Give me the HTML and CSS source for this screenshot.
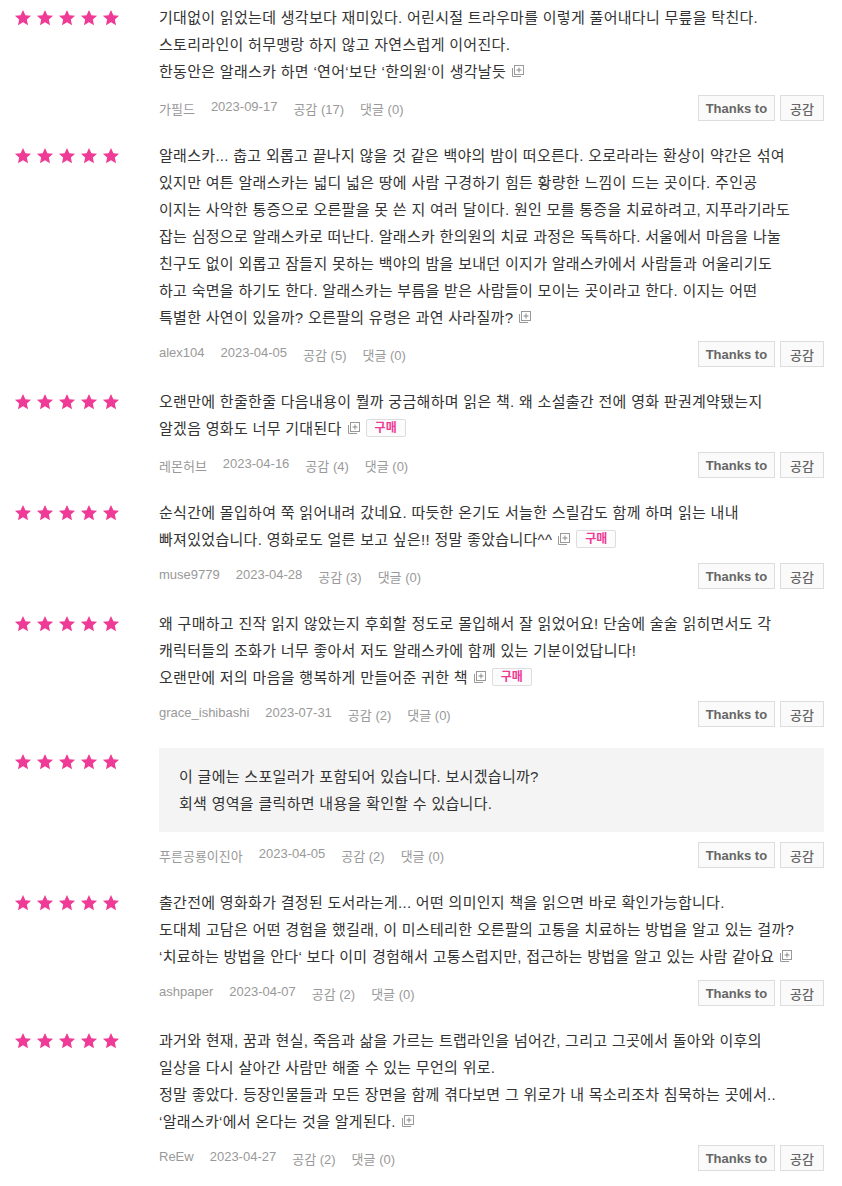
FILE: index.html
```html
<!DOCTYPE html>
<html lang="ko">
<head>
<meta charset="utf-8">
<title>리뷰</title>
<link rel="stylesheet" href="styles.css">
</head>
<body>
<svg width="0" height="0" class="defs">
  <defs>
    <symbol id="star" viewBox="0 0 24 24"><path d="M12 1.2l3.2 7 7.6.8-5.7 5.1 1.6 7.5L12 17.7l-6.7 3.9 1.6-7.5L1.2 9l7.6-.8z"/></symbol>
    <symbol id="more" viewBox="0 0 13 13"><rect x="3.5" y="0.5" width="9" height="9" fill="#fff" stroke="#999"/><path d="M8 2.5v5M5.5 5h5" stroke="#888"/><path d="M1.5 3v8.5H10" fill="none" stroke="#999"/></symbol>
  </defs>
</svg>
<div class="list">

  <div class="review">
    <div class="stars"><svg><use href="#star"/></svg><svg><use href="#star"/></svg><svg><use href="#star"/></svg><svg><use href="#star"/></svg><svg><use href="#star"/></svg></div>
    <div class="body">
      <p class="text">기대없이 읽었는데 생각보다 재미있다. 어린시절 트라우마를 이렇게 풀어내다니 무릎을 탁친다.<br>스토리라인이 허무맹랑 하지 않고 자연스럽게 이어진다.<br>한동안은 알래스카 하면 ‘연어‘보단 ‘한의원‘이 생각날듯<svg class="more"><use href="#more"/></svg></p>
      <div class="meta"><div class="info"><span>가필드</span><span>2023-09-17</span><span>공감 (17)</span><span>댓글 (0)</span></div><div class="btns"><button class="btn">Thanks to</button><button class="btn btn-ko">공감</button></div></div>
    </div>
  </div>

  <div class="review">
    <div class="stars"><svg><use href="#star"/></svg><svg><use href="#star"/></svg><svg><use href="#star"/></svg><svg><use href="#star"/></svg><svg><use href="#star"/></svg></div>
    <div class="body">
      <p class="text">알래스카... 춥고 외롭고 끝나지 않을 것 같은 백야의 밤이 떠오른다. 오로라라는 환상이 약간은 섞여<br>있지만 여튼 알래스카는 넓디 넓은 땅에 사람 구경하기 힘든 황량한 느낌이 드는 곳이다. 주인공<br>이지는 사악한 통증으로 오른팔을 못 쓴 지 여러 달이다. 원인 모를 통증을 치료하려고, 지푸라기라도<br>잡는 심정으로 알래스카로 떠난다. 알래스카 한의원의 치료 과정은 독특하다. 서울에서 마음을 나눌<br>친구도 없이 외롭고 잠들지 못하는 백야의 밤을 보내던 이지가 알래스카에서 사람들과 어울리기도<br>하고 숙면을 하기도 한다. 알래스카는 부름을 받은 사람들이 모이는 곳이라고 한다. 이지는 어떤<br>특별한 사연이 있을까? 오른팔의 유령은 과연 사라질까?<svg class="more"><use href="#more"/></svg></p>
      <div class="meta"><div class="info"><span>alex104</span><span>2023-04-05</span><span>공감 (5)</span><span>댓글 (0)</span></div><div class="btns"><button class="btn">Thanks to</button><button class="btn btn-ko">공감</button></div></div>
    </div>
  </div>

  <div class="review">
    <div class="stars"><svg><use href="#star"/></svg><svg><use href="#star"/></svg><svg><use href="#star"/></svg><svg><use href="#star"/></svg><svg><use href="#star"/></svg></div>
    <div class="body">
      <p class="text">오랜만에 한줄한줄 다음내용이 뭘까 궁금해하며 읽은 책. 왜 소설출간 전에 영화 판권계약됐는지<br>알겠음 영화도 너무 기대된다<svg class="more"><use href="#more"/></svg><span class="badge">구매</span></p>
      <div class="meta"><div class="info"><span>레몬허브</span><span>2023-04-16</span><span>공감 (4)</span><span>댓글 (0)</span></div><div class="btns"><button class="btn">Thanks to</button><button class="btn btn-ko">공감</button></div></div>
    </div>
  </div>

  <div class="review">
    <div class="stars"><svg><use href="#star"/></svg><svg><use href="#star"/></svg><svg><use href="#star"/></svg><svg><use href="#star"/></svg><svg><use href="#star"/></svg></div>
    <div class="body">
      <p class="text">순식간에 몰입하여 쭉 읽어내려 갔네요. 따듯한 온기도 서늘한 스릴감도 함께 하며 읽는 내내<br>빠져있었습니다. 영화로도 얼른 보고 싶은!! 정말 좋았습니다^^<svg class="more"><use href="#more"/></svg><span class="badge">구매</span></p>
      <div class="meta"><div class="info"><span>muse9779</span><span>2023-04-28</span><span>공감 (3)</span><span>댓글 (0)</span></div><div class="btns"><button class="btn">Thanks to</button><button class="btn btn-ko">공감</button></div></div>
    </div>
  </div>

  <div class="review">
    <div class="stars"><svg><use href="#star"/></svg><svg><use href="#star"/></svg><svg><use href="#star"/></svg><svg><use href="#star"/></svg><svg><use href="#star"/></svg></div>
    <div class="body">
      <p class="text">왜 구매하고 진작 읽지 않았는지 후회할 정도로 몰입해서 잘 읽었어요! 단숨에 술술 읽히면서도 각<br>캐릭터들의 조화가 너무 좋아서 저도 알래스카에 함께 있는 기분이었답니다!<br>오랜만에 저의 마음을 행복하게 만들어준 귀한 책<svg class="more"><use href="#more"/></svg><span class="badge">구매</span></p>
      <div class="meta"><div class="info"><span>grace_ishibashi</span><span>2023-07-31</span><span>공감 (2)</span><span>댓글 (0)</span></div><div class="btns"><button class="btn">Thanks to</button><button class="btn btn-ko">공감</button></div></div>
    </div>
  </div>

  <div class="review">
    <div class="stars"><svg><use href="#star"/></svg><svg><use href="#star"/></svg><svg><use href="#star"/></svg><svg><use href="#star"/></svg><svg><use href="#star"/></svg></div>
    <div class="body">
      <div class="spoiler">이 글에는 스포일러가 포함되어 있습니다. 보시겠습니까?<br>회색 영역을 클릭하면 내용을 확인할 수 있습니다.</div>
      <div class="meta"><div class="info"><span>푸른공룡이진아</span><span>2023-04-05</span><span>공감 (2)</span><span>댓글 (0)</span></div><div class="btns"><button class="btn">Thanks to</button><button class="btn btn-ko">공감</button></div></div>
    </div>
  </div>

  <div class="review">
    <div class="stars"><svg><use href="#star"/></svg><svg><use href="#star"/></svg><svg><use href="#star"/></svg><svg><use href="#star"/></svg><svg><use href="#star"/></svg></div>
    <div class="body">
      <p class="text">출간전에 영화화가 결정된 도서라는게... 어떤 의미인지 책을 읽으면 바로 확인가능합니다.<br>도대체 고담은 어떤 경험을 했길래, 이 미스테리한 오른팔의 고통을 치료하는 방법을 알고 있는 걸까?<br>‘치료하는 방법을 안다‘ 보다 이미 경험해서 고통스럽지만, 접근하는 방법을 알고 있는 사람 같아요<svg class="more"><use href="#more"/></svg></p>
      <div class="meta"><div class="info"><span>ashpaper</span><span>2023-04-07</span><span>공감 (2)</span><span>댓글 (0)</span></div><div class="btns"><button class="btn">Thanks to</button><button class="btn btn-ko">공감</button></div></div>
    </div>
  </div>

  <div class="review">
    <div class="stars"><svg><use href="#star"/></svg><svg><use href="#star"/></svg><svg><use href="#star"/></svg><svg><use href="#star"/></svg><svg><use href="#star"/></svg></div>
    <div class="body">
      <p class="text">과거와 현재, 꿈과 현실, 죽음과 삶을 가르는 트랩라인을 넘어간, 그리고 그곳에서 돌아와 이후의<br>일상을 다시 살아간 사람만 해줄 수 있는 무언의 위로.<br>정말 좋았다. 등장인물들과 모든 장면을 함께 겪다보면 그 위로가 내 목소리조차 침묵하는 곳에서..<br>‘알래스카‘에서 온다는 것을 알게된다.<svg class="more"><use href="#more"/></svg></p>
      <div class="meta"><div class="info"><span>ReEw</span><span>2023-04-27</span><span>공감 (2)</span><span>댓글 (0)</span></div><div class="btns"><button class="btn">Thanks to</button><button class="btn btn-ko">공감</button></div></div>
    </div>
  </div>

</div>
</body>
</html>
```

FILE: styles.css
```css
html, body {
  margin: 0;
  padding: 0;
  background: #fff;
}
body {
  font-family: "Liberation Sans", "Noto Sans CJK KR", sans-serif;
  color: #333;
}
.defs {
  position: absolute;
  width: 0;
  height: 0;
}
.list {
  width: 810px;
  padding-left: 14px;
}
.review {
  display: flex;
  padding: 4px 0 17px;
}
.stars {
  width: 145px;
  flex: none;
  display: flex;
  gap: 4px;
  padding-top: 5px;
  height: 18px;
}
.stars svg {
  width: 18px;
  height: 18px;
  fill: #ef3b96;
}
.body {
  flex: 1;
  min-width: 0;
}
.text {
  margin: 0;
  font-size: 15px;
  line-height: 27px;
  letter-spacing: 0.3px;
  color: #333;
  white-space: nowrap;
}
.more {
  width: 13px;
  height: 13px;
  margin-left: 5px;
  vertical-align: -1px;
}
.badge {
  display: inline-block;
  vertical-align: top;
  margin-top: 4px;
  margin-left: 6px;
  height: 16px;
  line-height: 16px;
  padding: 0 8px;
  border: 1px solid #ddd;
  border-radius: 2px;
  background: #fcfcfc;
  color: #ef3b96;
  font-size: 12px;
  font-weight: bold;
  letter-spacing: 0;
}
.spoiler {
  background: #f4f4f4;
  padding: 15px 20px 15px;
  font-size: 15px;
  line-height: 27px;
  letter-spacing: 0.3px;
  color: #333;
}
.meta {
  display: flex;
  justify-content: space-between;
  align-items: center;
  margin-top: 10px;
  height: 26px;
}
.info {
  display: flex;
  gap: 16px;
  font-size: 13px;
  color: #999;
  padding-top: 1px;
}
.btns {
  display: flex;
  gap: 5px;
}
.btn {
  height: 26px;
  padding: 0 7px;
  border: 1px solid #ddd;
  background: #fafafa;
  color: #666;
  font-family: "Liberation Sans", "Noto Sans CJK KR", sans-serif;
  font-size: 13px;
  font-weight: bold;
  margin: 0;
  cursor: pointer;
}
.btn-ko {
  font-weight: 500;
  padding: 0 9px;
}
```
